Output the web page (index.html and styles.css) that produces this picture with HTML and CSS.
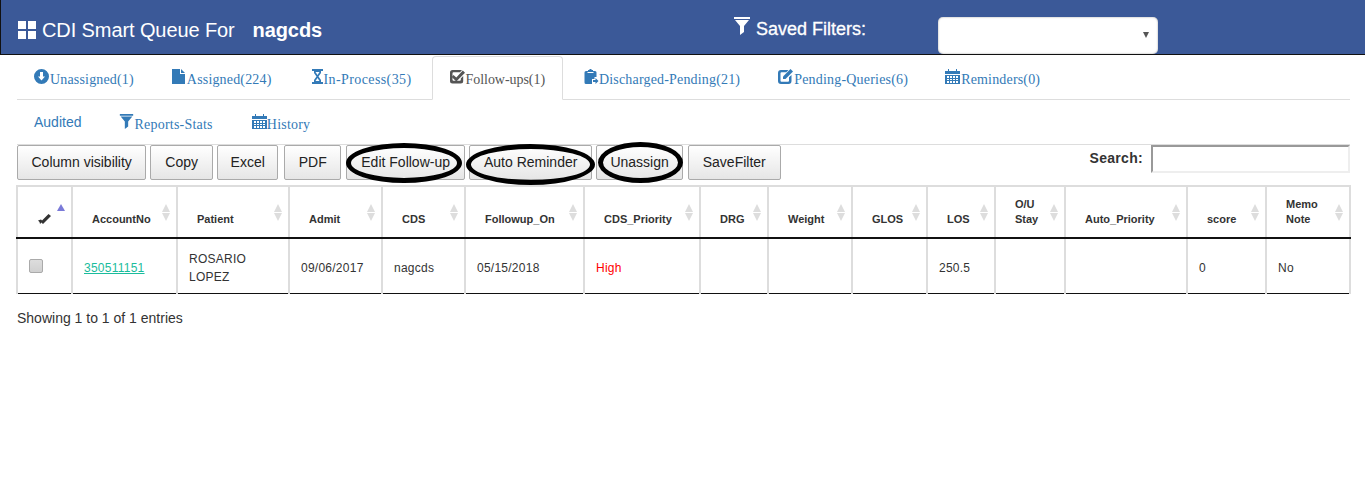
FILE: index.html
```html
<!doctype html>
<html lang="en">
  <head>
    <meta charset="utf-8">
    <title>CDI Smart Queue</title>
    <link rel="stylesheet" href="styles.css">
  </head>
  <body>
    <svg class="defs" width="0" height="0">
      <symbol id="i-filter" viewBox="0 0 16 18"><path d="M0 0H16V2H0ZM1 3H15L10 9V15L6 18V9Z"/></symbol>
      <symbol id="i-calendar" viewBox="0 0 15 15"><path fill-rule="evenodd" d="M0 2H3V0H4V2H11V0H12V2H15V5H0ZM0 6H15V15H0ZM2 7V9H4V7ZM5 7V9H7V7ZM8 7V9H10V7ZM11 7V9H13V7ZM2 10V11H4V10ZM5 10V11H7V10ZM8 10V11H10V10ZM11 10V11H13V10ZM2 12V14H4V12ZM5 12V14H7V12ZM8 12V14H10V12ZM11 12V14H13V12Z"/></symbol>
    </svg>

    <header class="topbar">
      <div class="brand">
        <svg class="icon-grid" viewBox="0 0 18 18"><path d="M0 0H8V8H0ZM10 0H18V8H10ZM0 10H8V18H0ZM10 10H18V18H10Z"/></svg>
        <span>CDI Smart Queue For</span>
        <b class="user">nagcds</b>
      </div>
      <div class="saved">
        <svg class="icon-funnel"><use href="#i-filter"/></svg>
        <span>Saved Filters:</span>
      </div>
      <div class="select-box"><span class="select-arrow"></span></div>
    </header>

    <main class="content">
      <ul class="tabs">
        <li><a href="#">
          <svg class="icon" viewBox="0 0 15 15"><path fill-rule="evenodd" d="M7.500 0A7.500 7.500 0 1 0 7.500 15A7.500 7.500 0 1 0 7.500 0ZM6 3H9V7.500H11L7.500 11.500L4 7.500H6Z"/></svg>Unassigned(1)</a></li>
        <li><a href="#">
          <svg class="icon icon-file" viewBox="0 0 13 15"><path d="M0 0H8V5H13V15H0ZM9 0L13 4H9Z"/></svg>Assigned(224)</a></li>
        <li><a class="tab-process" href="#">
          <svg class="icon icon-narrow" viewBox="0 0 11 15"><path fill-rule="evenodd" d="M0 0H11V2H0ZM0 13H11V15H0ZM2 2H9V4L6.500 7.500L9 11V13H2V11L4.500 7.500L2 4ZM3.500 3L5.500 6L7.500 3ZM5.500 9L3.500 12H7.500Z"/></svg>In-Process(35)</a></li>
        <li class="active"><a href="#">
          <svg class="icon" viewBox="0 0 15 15"><path d="M2.500 1H12L10 3.200H3.500Q2.500 3.200 2.500 4.200V10.800Q2.500 11.800 3.500 11.800H9.800Q10.800 11.800 10.800 10.800V9.500L13.200 7V12Q13.200 14.500 10.700 14.500H2.500Q0 14.500 0 12V3.500Q0 1 2.500 1Z"/><path d="M3.500 6L6.300 8.500L12.800 1.500L15 3.800L6.300 12.500L1.800 8Z"/></svg>Follow-ups(1)</a></li>
        <li><a class="tab-discharged" href="#">
          <svg class="icon" viewBox="0 0 14 15"><path fill-rule="evenodd" d="M1.500 2H3.500V1H5V0H7V1H8.500V2H10.500Q12 2 12 3.500V8H10V10H7.500V15H1.500Q0 15 0 13.500V3.500Q0 2 1.500 2ZM3 3V4H9V3Z"/><path d="M8.500 11H11V9L14 12L11 15V13H8.500Z"/></svg>Discharged-Pending(21)</a></li>
        <li><a class="tab-queries" href="#">
          <svg class="icon" viewBox="0 0 15 15"><path fill-rule="evenodd" d="M3 1H10.500L8.300 3.300H3.500Q2.500 3.300 2.500 4.300V11.700Q2.500 12.700 3.500 12.700H10Q11 12.700 11 11.700V8.300L13.500 6V12Q13.500 15 10.500 15H3Q0 15 0 12V4Q0 1 3 1Z"/><path d="M5 7.500L12.500 0L15 2.500L7.500 10H5Z"/></svg>Pending-Queries(6)</a></li>
        <li><a href="#">
          <svg class="icon"><use href="#i-calendar"/></svg>Reminders(0)</a></li>
      </ul>

      <nav class="subnav">
        <a class="audited" href="#">Audited</a>
        <a class="reports" href="#"><svg class="icon icon-sub"><use href="#i-filter"/></svg>Reports-Stats</a>
        <a class="history" href="#"><svg class="icon icon-sub"><use href="#i-calendar"/></svg>History</a>
      </nav>

      <div class="toolbar">
        <div class="buttons">
          <button class="btn btn-columns">Column visibility</button>
          <button class="btn">Copy</button>
          <button class="btn btn-excel">Excel</button>
          <button class="btn btn-pdf">PDF</button>
          <button class="btn btn-edit">Edit Follow-up<span class="ring"></span></button>
          <button class="btn btn-auto">Auto Reminder<span class="ring"></span></button>
          <button class="btn btn-unassign">Unassign<span class="ring"></span></button>
          <button class="btn btn-save">SaveFilter</button>
        </div>
        <label class="search">Search:<input type="text"></label>
      </div>

      <table class="grid">
        <colgroup>
          <col style="width:55px"><col style="width:105px"><col style="width:112px"><col style="width:93px"><col style="width:83px">
          <col style="width:119px"><col style="width:116px"><col style="width:68px"><col style="width:84px"><col style="width:75px">
          <col style="width:68px"><col style="width:70px"><col style="width:122px"><col style="width:79px"><col style="width:84px">
        </colgroup>
        <thead>
          <tr>
            <th class="sorted"><svg class="icon-tick" viewBox="0 0 13 11"><path d="M0 7.500L3 6.500L4 7.500L10.500 1L13 3L5 11L3.500 9.500L2 11L1.500 9Z"/></svg></th>
            <th>AccountNo</th>
            <th>Patient</th>
            <th>Admit</th>
            <th>CDS</th>
            <th>Followup_On</th>
            <th>CDS_Priority</th>
            <th>DRG</th>
            <th>Weight</th>
            <th>GLOS</th>
            <th>LOS</th>
            <th>O/U<br>Stay</th>
            <th>Auto_Priority</th>
            <th>score</th>
            <th>Memo<br>Note</th>
          </tr>
        </thead>
        <tbody>
          <tr>
            <td class="pick"><span class="checkbox"></span></td>
            <td><a class="account" href="#">350511151</a></td>
            <td>ROSARIO<br>LOPEZ</td>
            <td>09/06/2017</td>
            <td>nagcds</td>
            <td>05/15/2018</td>
            <td class="high">High</td>
            <td></td>
            <td></td>
            <td></td>
            <td>250.5</td>
            <td></td>
            <td></td>
            <td>0</td>
            <td>No</td>
          </tr>
        </tbody>
      </table>

      <p class="info">Showing 1 to 1 of 1 entries</p>
    </main>
  </body>
</html>
```

FILE: styles.css
```css
body {
  margin: 0;
  font-family: "Liberation Sans", Arial, sans-serif;
  font-size: 14px;
  color: #333;
  background: #fff;
}

.defs {
  position: absolute;
}

/* top bar */
.topbar {
  display: flex;
  height: 54px;
  background: #3b5998;
  border-left: 1px solid #111;
  border-bottom: 1px solid #111;
  color: #fff;
}

.brand {
  display: flex;
  align-items: center;
  width: 715px;
  padding: 6px 0 0 17px;
  box-sizing: border-box;
  font-size: 20px;
  letter-spacing: -0.1px;
}

.icon-grid {
  width: 18px;
  height: 18px;
  margin-right: 6px;
  fill: #fff;
}

.user {
  margin-left: 18px;
}

.saved {
  display: flex;
  align-items: flex-start;
  width: 222px;
  padding: 17px 0 0 18px;
  box-sizing: border-box;
  font-size: 18px;
}

.saved span {
  margin: 2px 0 0 6px;
  -webkit-text-stroke: 0.3px #fff;
}

.icon-funnel {
  width: 16px;
  height: 18px;
  fill: #fff;
}

.select-box {
  position: relative;
  width: 220px;
  height: 37px;
  margin-top: 17px;
  background: #fff;
  border-radius: 5px;
  box-shadow: inset 0 0 2px #999;
}

.select-arrow {
  position: absolute;
  top: 15px;
  right: 9px;
  border-left: 3px solid transparent;
  border-right: 3px solid transparent;
  border-top: 6px solid #555;
}

/* tabs */
.content {
  padding: 0 15px 0 17px;
}

.tabs {
  display: flex;
  gap: 2px;
  height: 43px;
  margin: 1px 0 0;
  padding: 0;
  list-style: none;
  border-bottom: 1px solid #ddd;
}

.tabs li {
  height: 44px;
}

.tabs a {
  display: block;
  height: 44px;
  padding: 13px 18px 0;
  box-sizing: border-box;
  font-family: "Liberation Serif", "Times New Roman", serif;
  font-size: 14px;
  letter-spacing: 0.17px;
  color: #337ab7;
  text-decoration: none;
  white-space: nowrap;
}

.tabs li:first-child a {
  padding-left: 17px;
}

.tabs .tab-process {
  letter-spacing: 0.4px;
}

.tabs .tab-discharged .icon {
  margin-right: 0;
}

.tabs .tab-queries {
  padding-right: 17px;
  letter-spacing: 0.2px;
}

.tabs .active a {
  padding: 12px 17px 0;
  letter-spacing: -0.05px;
  color: #555;
  background: #fff;
  border: 1px solid #ddd;
  border-bottom-color: #fff;
  border-radius: 4px 4px 0 0;
}

.tabs .active {
  margin-right: 1px;
}

.icon {
  width: 15px;
  height: 15px;
  margin-right: 1px;
  vertical-align: 0;
  fill: #337ab7;
}

.icon-file {
  width: 13px;
  margin-right: 2px;
}

.icon-narrow {
  width: 11px;
  margin: 0 1px 0 2px;
}

.active .icon {
  fill: #555;
}

.subnav {
  display: flex;
  align-items: flex-start;
  height: 44px;
  padding: 14px 0 0 17px;
  box-sizing: border-box;
}

.subnav a {
  color: #337ab7;
  text-decoration: none;
}

.subnav .reports,
.subnav .history {
  font-family: "Liberation Serif", "Times New Roman", serif;
  letter-spacing: 0.22px;
}

.reports {
  margin-left: 38px;
}

.history {
  margin-left: 39px;
}

.icon-sub {
  margin-right: 0;
}

/* buttons and search */
.toolbar {
  display: flex;
  justify-content: space-between;
  height: 40px;
  border-top: 1px solid #ddd;
}

.buttons {
  display: flex;
  gap: 4px;
}

.btn {
  position: relative;
  height: 35px;
  padding: 0 14px 2px;
  border: 1px solid #aaa;
  border-radius: 2px;
  background: linear-gradient(#fff, #e6e6e6);
  font-family: "Liberation Sans", Arial, sans-serif;
  font-size: 14px;
  color: #222;
  white-space: nowrap;
}

.btn-columns {
  padding: 0 13.5px 2px;
}

.btn-excel {
  padding: 0 12.5px 2px;
}

.btn-pdf {
  margin-left: 2px;
  padding: 0 13.5px 2px;
}

.btn-edit {
  margin-left: 1px;
}

.btn-unassign {
  padding: 0 13px 2px;
}

.btn-save {
  margin-left: 1px;
}

.ring {
  position: absolute;
  border: 5px solid #000;
  border-radius: 50%;
}

.btn-edit .ring {
  top: -3px;
  left: -1px;
  width: 106px;
  height: 30px;
}

.btn-auto .ring {
  top: -2px;
  left: -4px;
  width: 119px;
  height: 31px;
}

.btn-unassign .ring {
  top: -4px;
  left: 1px;
  width: 75px;
  height: 31px;
}

.search {
  display: flex;
  align-items: flex-start;
  font-size: 14px;
  font-weight: bold;
  letter-spacing: 0.3px;
  line-height: 27px;
}

.search input {
  width: 199px;
  height: 28px;
  margin: 0 0 0 8px;
  padding: 0;
  box-sizing: border-box;
  border: 2px solid;
  border-color: #999 #eee #eee #999;
  background: #fff;
}

/* table */
.grid {
  width: 1333px;
  margin-left: -1px;
  table-layout: fixed;
  border-collapse: collapse;
  font-size: 12px;
}

.grid th {
  position: relative;
  height: 52px;
  padding: 0 16px 10px 19px;
  box-sizing: border-box;
  vertical-align: bottom;
  text-align: left;
  font-size: 11px;
  line-height: 15px;
  color: #333;
  border: 2px solid #ddd;
  border-bottom: 2px solid #111;
}

.grid th::before,
.grid th::after {
  content: "";
  position: absolute;
  right: 6px;
  border-left: 4px solid transparent;
  border-right: 4px solid transparent;
}

.grid th::before {
  top: 17px;
  border-bottom: 8px solid #ddd;
}

.grid th::after {
  top: 26px;
  border-top: 8px solid #ddd;
}

.grid th.sorted {
  padding: 0 0 13px 20px;
}

.grid th.sorted::before {
  top: 17px;
  border-bottom: 7px solid #7a7ad8;
}

.grid th.sorted::after {
  display: none;
}

.icon-tick {
  display: block;
  width: 13px;
  height: 11px;
  fill: #333;
}

.grid td {
  height: 55px;
  padding: 4px 11px 0;
  box-sizing: border-box;
  font-size: 12px;
  line-height: 18px;
  letter-spacing: 0.25px;
  color: #333;
  border: 2px solid #ddd;
  border-top: 0;
  border-bottom: 1px solid #111;
}

.grid td.pick {
  padding: 0 0 0 11px;
}

.checkbox {
  display: block;
  width: 12px;
  height: 12px;
  border: 1px solid #aaa;
  border-radius: 2px;
  background: linear-gradient(#ddd, #d0d0d0);
}

.account {
  color: #1abc9c;
}

.grid .high {
  color: #f00;
}

.info {
  margin: 16px 0 0;
  color: #333;
}
```
